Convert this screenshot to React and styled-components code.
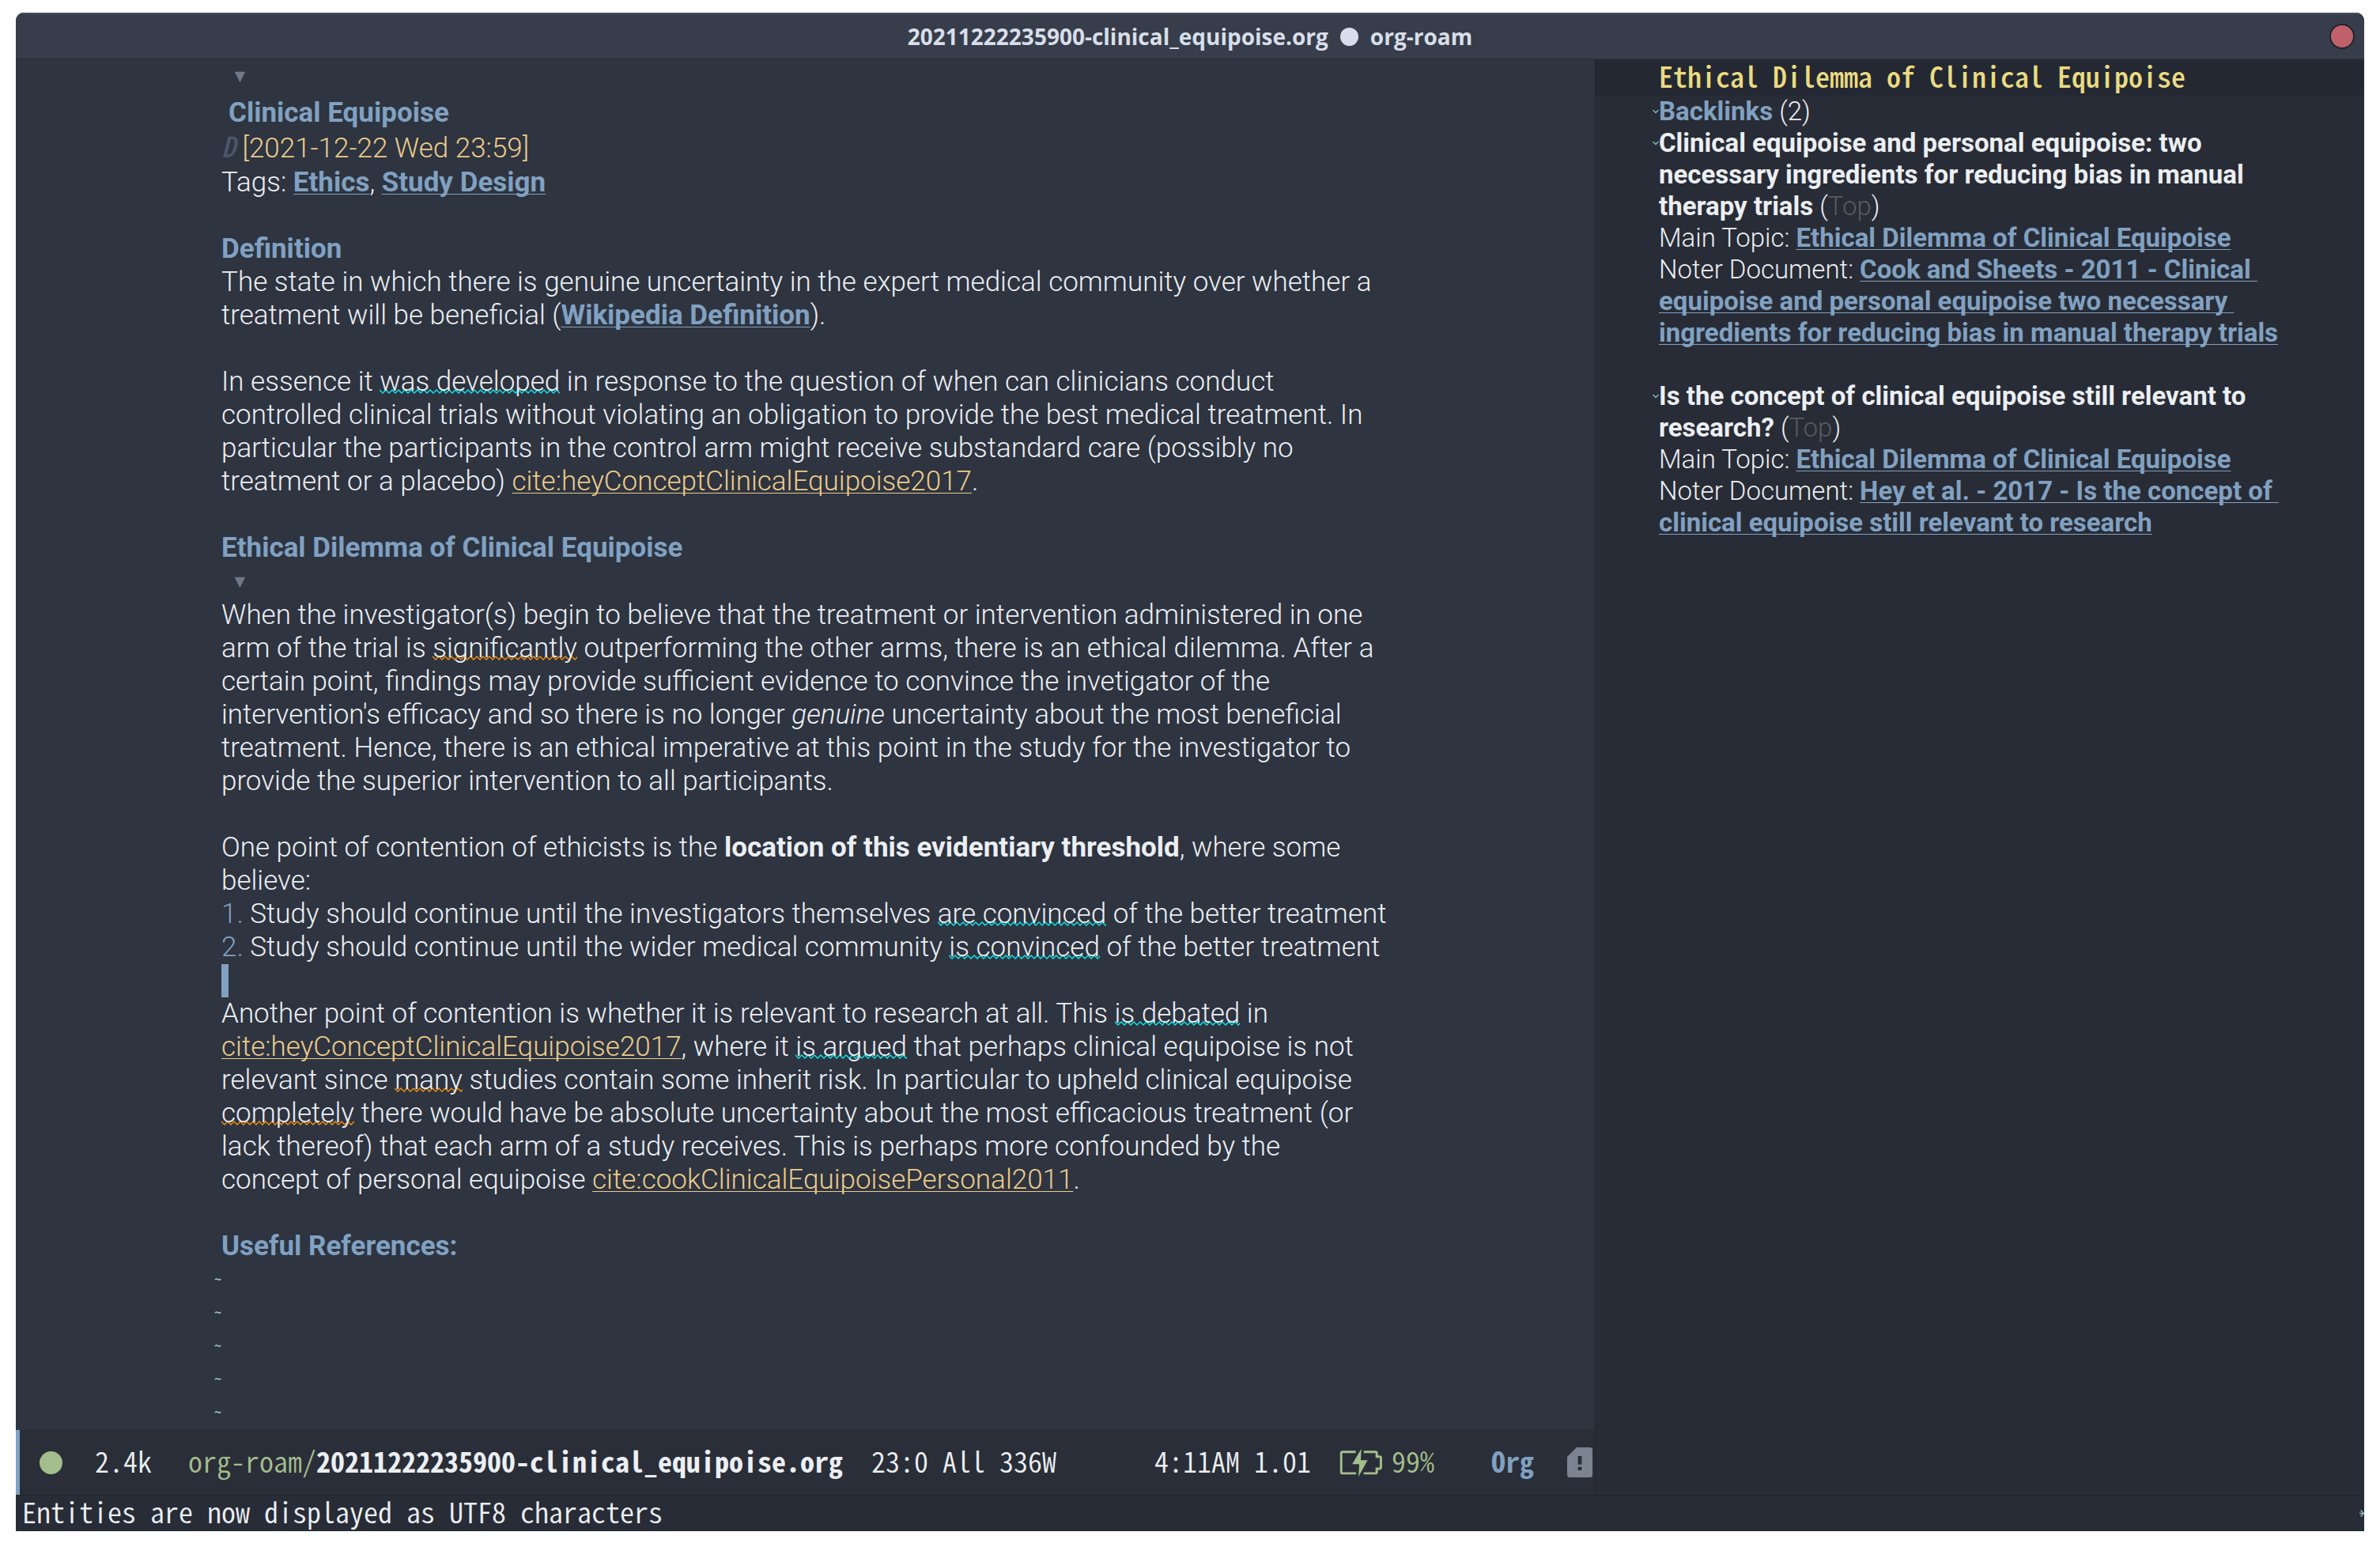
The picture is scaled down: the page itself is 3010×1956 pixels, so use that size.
import React from "react";
import styled, { createGlobalStyle, css } from "styled-components";

const color = {
  editor: "#2e3440",
  panel: "#282c36",
  header: "#242832",
  modeline: "#2a2e38",
  titlebar: "#373d4a",
  line: "#1f232b",
  text: "#eceff4",
  blue: "#81a1c1",
  yellow: "#ebcb8b",
  green: "#a3be8c",
  teal: "#8fbcbb",
  red: "#bf616a",
  grey: "#717785",
};

const mono = css`
  font-family: "Noto Sans CJK SC", "Noto Sans Mono CJK SC", monospace;
  font-feature-settings: "hwid";
  font-size: 36px;
  font-weight: 350;
  white-space: pre;
`;

const wave = (stroke) =>
  `url("data:image/svg+xml,${encodeURIComponent(
    `<svg xmlns="http://www.w3.org/2000/svg" width="8" height="6"><path d="M-1 0L0 1L4 5L8 1L9 0" fill="none" stroke="${stroke}" stroke-width="1.5"/></svg>`
  )}")`;

const GlobalStyle = createGlobalStyle`
  * { box-sizing: border-box; }
  body { margin: 0; background: #fff; }
  b { font-weight: 700; }
`;

const Desktop = styled.div`
  height: 100vh;
  padding: 16px 20px 20px;
  display: flex;
`;

const Frame = styled.div`
  flex: 1;
  display: flex;
  flex-direction: column;
  overflow: hidden;
  border-radius: 10px 10px 0 0;
  background: ${color.panel};
  color: ${color.text};
  font-family: Roboto, sans-serif;
  font-weight: 300;
`;

const TitleBar = styled.header`
  display: grid;
  grid-template-columns: 1fr auto 1fr;
  align-items: center;
  height: 58px;
  padding: 0 12px;
  border-top: 2px solid #474e5c;
  background: ${color.titlebar};
`;

const Title = styled.h1`
  grid-column: 2;
  display: flex;
  align-items: center;
  gap: 15px;
  margin: 0;
  color: #d8dee9;
  font: 700 28px/40px "Open Sans", "Noto Sans", sans-serif;
`;

const ModifiedDot = styled.span`
  width: 23px;
  height: 23px;
  border-radius: 50%;
  background: currentColor;
`;

const CloseButton = styled.button`
  justify-self: end;
  width: 32px;
  height: 32px;
  padding: 0;
  border: 2px solid #20242c;
  border-radius: 50%;
  background: ${color.red};
`;

const Windows = styled.div`
  flex: 1;
  display: grid;
  grid-template-columns: 1fr 973px;
  min-height: 0;
  border-top: 1px solid #2b303a;
`;

const EditorWindow = styled.main`
  display: flex;
  flex-direction: column;
  background: ${color.editor};
`;

const Buffer = styled.article`
  flex: 1;
  padding-left: 260px;
  font-size: 35px;
  line-height: 42px;
`;

const Column = styled.div`
  max-width: 1490px;
`;

const FoldMark = styled.div`
  height: ${(p) => (p.$first ? 45 : 43)}px;
  padding-left: 12px;
  color: ${color.grey};
  font-family: "DejaVu Sans", sans-serif;
  font-size: 23px;
`;

const DocTitle = styled.h2`
  margin: 0;
  padding-left: 9px;
  font-size: 35px;
  line-height: 45px;
  color: ${color.blue};
`;

const Heading = styled.h3`
  margin: 0;
  font-size: inherit;
  color: ${color.blue};
`;

const Paragraph = styled.p`
  margin: 0 0 ${(p) => (p.$tight ? 0 : 42)}px;
`;

const DateLine = styled.div`
  height: 45px;
  color: ${color.yellow};
`;

const Drawer = styled.span`
  ${mono}
  line-height: 36px;
  font-weight: 500;
  font-style: italic;
  color: #4c566a;
`;

const Link = styled.a`
  color: ${(p) => (p.$cite ? color.yellow : color.blue)};
  font-weight: ${(p) => (p.$cite ? 300 : 700)};
  text-decoration: underline 1px;
  text-underline-offset: 3px;
  text-decoration-skip-ink: none;
  white-space: break-spaces;
`;

const Lint = styled.span`
  background: ${(p) => wave(p.$weasel ? "#f08c0c" : "#0be4e6")} 0 30px repeat-x;
`;

const List = styled.ol`
  margin: 0;
  padding: 0;
  list-style: none;
`;

const Bullet = styled.span`
  color: ${color.blue};
`;

const Cursor = styled.div`
  width: 9px;
  height: 42px;
  background: ${color.blue};
`;

const Tilde = styled.div`
  height: 42px;
  margin-left: -9px;
  color: ${color.teal};
  font-family: "DejaVu Sans Mono", monospace;
  font-size: 15px;
  font-weight: 700;
`;

const ModeLine = styled.footer`
  ${mono}
  display: flex;
  justify-content: space-between;
  height: 82px;
  line-height: 76px;
  padding-right: 3px;
  border-left: 5px solid ${color.blue};
  background: ${color.modeline};
`;

const Segment = styled.div`
  display: flex;
  gap: ${(p) => p.$gap}px;
  padding-left: ${(p) => p.$indent || 0}px;
`;

const StateDot = styled.span`
  align-self: center;
  width: 29px;
  height: 29px;
  border-radius: 50%;
  background: ${color.green};
`;

const Directory = styled.span`
  color: ${color.green};
`;

const Battery = styled.span`
  display: flex;
  gap: 11px;
  color: ${color.green};
  margin-right: 36px;
`;

const Mode = styled.span`
  margin-right: 6px;
  color: ${color.blue};
  font-weight: 700;
`;

const Glyph = styled.svg`
  align-self: center;
  flex: none;
  width: ${(p) => p.$w}px;
  height: ${(p) => p.$h}px;
`;

const SidePanel = styled.aside`
  border-left: 1px solid ${color.line};
  font-size: 33px;
  line-height: 40px;
`;

const PanelHeader = styled.h2`
  ${mono}
  height: 46px;
  margin: 0;
  padding-left: 80px;
  font-weight: 500;
  line-height: 40px;
  color: #ebdb80;
  background: ${color.header};
`;

const PanelBody = styled.div`
  padding: 0 80px;
`;

const Entry = styled.section`
  margin-bottom: 40px;
`;

const EntryTitle = styled.div`
  b { color: ${(p) => (p.$accent ? color.blue : color.text)}; }
`;

const Outline = styled.span`
  color: #5a5b5e;
`;

const Caret = styled.svg`
  width: 8px;
  height: 6px;
  margin-left: -8px;
  vertical-align: 8px;
`;

const EchoArea = styled.div`
  ${mono}
  display: flex;
  justify-content: space-between;
  height: 46px;
  padding-left: 8px;
  border-top: 1px solid ${color.line};
  line-height: 38px;
`;

const Fold = () => (
  <Caret viewBox="0 0 8 6">
    <path d="M0.5 1L4 4.5L7.5 1" fill="none" stroke={color.teal} strokeWidth="1.3" />
  </Caret>
);

const Cite = ({ children }) => <Link href="#cite" $cite>{children}</Link>;

function Backlink({ title, doc }) {
  return (
    <Entry>
      <EntryTitle><Fold /><b>{title}</b> (<Outline>Top</Outline>)</EntryTitle>
      <div>Main Topic: <Link href="#topic">Ethical Dilemma of Clinical Equipoise</Link></div>
      <div>Noter Document: <Link href="#doc">{doc}</Link></div>
    </Entry>
  );
}

export default function App() {
  return (
    <Desktop>
      <GlobalStyle />
      <Frame>
        <TitleBar>
          <Title>20211222235900-clinical_equipoise.org<ModifiedDot />org-roam</Title>
          <CloseButton aria-label="Close" />
        </TitleBar>
        <Windows>
          <EditorWindow>
            <Buffer>
              <Column>
                <FoldMark $first>▼</FoldMark>
                <DocTitle>Clinical Equipoise</DocTitle>
                <DateLine><Drawer>D</Drawer> [2021-12-22 Wed 23:59]</DateLine>
                <Paragraph>
                  Tags: <Link href="#ethics">Ethics</Link>, <Link href="#design">Study Design</Link>
                </Paragraph>
                <Heading>Definition</Heading>
                <Paragraph>
                  The state in which there is genuine uncertainty in the expert medical community over
                  whether a treatment will be beneficial (<Link href="#wiki">Wikipedia Definition</Link>).
                </Paragraph>
                <Paragraph>
                  In essence it <Lint>was developed</Lint> in response to the question of when can
                  clinicians conduct controlled clinical trials without violating an obligation to
                  provide the best medical treatment. In particular the participants in the control arm
                  might receive substandard care (possibly no treatment or a
                  placebo) <Cite>cite:heyConceptClinicalEquipoise2017</Cite>.
                </Paragraph>
                <Heading>Ethical Dilemma of Clinical Equipoise</Heading>
                <FoldMark>▼</FoldMark>
                <Paragraph>
                  When the investigator(s) begin to believe that the treatment or intervention
                  administered in one arm of the trial is <Lint $weasel>significantly</Lint> outperforming
                  the other arms, there is an ethical dilemma. After a certain point, findings may
                  provide sufficient evidence to convince the invetigator of the intervention's efficacy
                  and so there is no longer <em>genuine</em> uncertainty about the most beneficial
                  treatment. Hence, there is an ethical imperative at this point in the study for the
                  investigator to provide the superior intervention to all participants.
                </Paragraph>
                <Paragraph $tight>
                  One point of contention of ethicists is the <b>location of this evidentiary
                  threshold</b>, where some believe:
                </Paragraph>
                <List>
                  <li>
                    <Bullet>1.</Bullet> Study should continue until the investigators
                    themselves <Lint>are convinced</Lint> of the better treatment
                  </li>
                  <li>
                    <Bullet>2.</Bullet> Study should continue until the wider medical
                    community <Lint>is convinced</Lint> of the better treatment
                  </li>
                </List>
                <Cursor />
                <Paragraph>
                  Another point of contention is whether it is relevant to research at all.
                  This <Lint>is debated</Lint> in <Cite>cite:heyConceptClinicalEquipoise2017</Cite>, where
                  it <Lint>is argued</Lint> that perhaps clinical equipoise is not relevant
                  since <Lint $weasel>many</Lint> studies contain some inherit risk. In particular to
                  upheld clinical equipoise <Lint $weasel>completely</Lint> there would have be absolute
                  uncertainty about the most efficacious treatment (or lack thereof) that each arm of a
                  study receives. This is perhaps more confounded by the<br />
                  concept of personal equipoise <Cite>cite:cookClinicalEquipoisePersonal2011</Cite>.
                </Paragraph>
                <Heading>Useful References:</Heading>
                {[0, 1, 2, 3, 4].map((n) => <Tilde key={n}>~</Tilde>)}
              </Column>
            </Buffer>
            <ModeLine>
              <Segment $gap={36} $indent={25}>
                <Segment $gap={41}><StateDot /><span>2.4k</span></Segment>
                <Segment $indent={10}>
                  <Directory>org-roam/</Directory><b>20211222235900-clinical_equipoise.org</b>
                </Segment>
                <span>23:0 All 336W</span>
              </Segment>
              <Segment $gap={36}>
                <span>4:11AM 1.01</span>
                <Battery>
                  <Glyph $w={55} $h={37} viewBox="45 96 165 112">
                    <g fill="none" stroke="currentColor" strokeWidth="9">
                      <path d="M107 110.500H56q-5 0-5 5v72q0 5 5 5H108" />
                      <path d="M137 110.500h45q5 0 5 5v13h11q5 0 5 5v36q0 5-5 5h-11v13q0 5-5 5H137" />
                    </g>
                    <path fill="currentColor" d="M128 98L93 157H120L117 206L152 142H126Z" />
                  </Glyph>
                  <span>99%</span>
                </Battery>
                <Mode>Org</Mode>
                <Glyph $w={32} $h={38} viewBox="909 96 96 114">
                  <path fill="#7b8290" fillRule="evenodd" d="M945 96H995q10 0 10 10v94q0 10-10 10H919q-10 0-10-10V132ZM950 129v32h14v-32ZM950 170v13h14v-13Z" />
                </Glyph>
              </Segment>
            </ModeLine>
          </EditorWindow>
          <SidePanel>
            <PanelHeader>Ethical Dilemma of Clinical Equipoise</PanelHeader>
            <PanelBody>
              <EntryTitle $accent><Fold /><b>Backlinks</b> (2)</EntryTitle>
              <Backlink
                title="Clinical equipoise and personal equipoise: two necessary ingredients for reducing bias in manual therapy trials"
                doc="Cook and Sheets - 2011 - Clinical equipoise and personal equipoise two necessary ingredients for reducing bias in manual therapy trials"
              />
              <Backlink
                title="Is the concept of clinical equipoise still relevant to research?"
                doc="Hey et al. - 2017 - Is the concept of clinical equipoise still relevant to research"
              />
            </PanelBody>
          </SidePanel>
        </Windows>
        <EchoArea>
          <span>Entities are now displayed as UTF8 characters</span>
          <Glyph $w={6} $h={9} viewBox="0 0 6 9">
            <path d="M0 4.500H5M1.500 0.500L5.500 4.500L1.500 8.500" fill="none" stroke={color.teal} strokeWidth="1.5" />
          </Glyph>
        </EchoArea>
      </Frame>
    </Desktop>
  );
}
